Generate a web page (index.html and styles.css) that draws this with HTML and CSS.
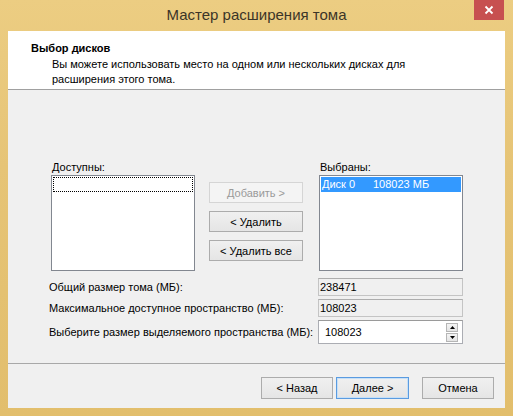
FILE: index.html
```html
<!DOCTYPE html>
<html lang="ru">
<head>
<meta charset="utf-8">
<title>Мастер расширения тома</title>
<link rel="stylesheet" href="styles.css">
</head>
<body>
<div class="window">
  <div class="titlebar">
    <div class="title">Мастер расширения тома</div>
    <div class="close">
      <svg width="10" height="10" viewBox="0 0 10 10"><path d="M1.5 1.5 L8.5 8.5 M8.5 1.5 L1.5 8.5" stroke="#fff" stroke-width="1.8"/></svg>
    </div>
  </div>
  <div class="client">
    <div class="header">
      <div class="h-title">Выбор дисков</div>
      <div class="h-desc">Вы можете использовать место на одном или нескольких дисках для расширения этого тома.</div>
    </div>
    <div class="body">
      <div class="lists">
        <div class="col">
          <div class="label">Доступны:</div>
          <div class="listbox">
            <div class="focus-row"></div>
          </div>
        </div>
        <div class="mid">
          <div class="btn disabled">Добавить &gt;</div>
          <div class="btn">&lt; Удалить</div>
          <div class="btn">&lt; Удалить все</div>
        </div>
        <div class="col col-right">
          <div class="label">Выбраны:</div>
          <div class="listbox">
            <div class="sel-row"><span class="disk">Диск 0</span><span>108023 МБ</span></div>
          </div>
        </div>
      </div>
      <div class="fields">
        <div class="f-label">Общий размер тома (МБ):</div>
        <div class="ro">238471</div>
        <div class="f-label">Максимальное доступное пространство (МБ):</div>
        <div class="ro">108023</div>
        <div class="f-label">Выберите размер выделяемого пространства (МБ):</div>
        <div class="num">
          <span class="num-val">108023</span>
          <span class="spin">
            <span class="spin-btn"><svg width="5" height="3" viewBox="0 0 5 3"><path d="M0 3 L2.5 0 L5 3 Z" fill="#000"/></svg></span>
            <span class="spin-btn"><svg width="5" height="3" viewBox="0 0 5 3"><path d="M0 0 L2.5 3 L5 0 Z" fill="#000"/></svg></span>
          </span>
        </div>
      </div>
    </div>
    <div class="footer">
      <div class="btn fbtn">&lt; Назад</div>
      <div class="btn fbtn default">Далее &gt;</div>
      <div class="btn fbtn cancel">Отмена</div>
    </div>
  </div>
</div>
</body>
</html>
```

FILE: styles.css
```css
html, body {
  margin: 0;
  padding: 0;
}
body {
  width: 513px;
  height: 416px;
  overflow: hidden;
  font-family: "Liberation Sans", Arial, sans-serif;
  font-size: 11px;
  color: #000;
}
.window {
  box-sizing: border-box;
  width: 513px;
  height: 416px;
  background: linear-gradient(180deg, #eccd82 0%, #e6c476 40%, #e2be6c 100%);
  padding: 0 8px 8px 8px;
  display: flex;
  flex-direction: column;
}
.titlebar {
  position: relative;
  height: 31px;
  flex: none;
}
.title {
  text-align: center;
  font-size: 15px;
  line-height: 30px;
  color: #3c3528;
  padding-right: 0;
}
.close {
  position: absolute;
  top: 0;
  right: 1px;
  width: 30px;
  height: 20px;
  background: #c75050;
  display: flex;
  align-items: center;
  justify-content: center;
}
.client {
  flex: 1;
  background: #f0f0f0;
  display: flex;
  flex-direction: column;
}
.header {
  background: #fff;
  height: 48px;
  padding: 10px 0 0 23px;
  border-bottom: 1px solid #a0a0a0;
  flex: none;
}
.h-title {
  font-weight: bold;
  line-height: 14px;
}
.h-desc {
  margin: 2px 0 0 21px;
  line-height: 15px;
  width: 370px;
}
.body {
  flex: 1;
}
.lists {
  display: flex;
  margin: 70px 0 0 43px;
}
.col {
  width: 144px;
}
.col-right {
  margin-left: 16px;
}
.label {
  line-height: 15px;
  padding-left: 1px;
}
.listbox {
  box-sizing: border-box;
  height: 96px;
  border: 1px solid #828790;
  background: #fff;
  padding: 1px;
}
.focus-row {
  height: 15px;
  outline: 1px dotted #000;
  outline-offset: 0;
  border: 1px dotted #000;
  box-sizing: border-box;
  outline: none;
}
.sel-row {
  height: 15px;
  background: #3399ff;
  color: #fff;
  line-height: 15px;
  padding-left: 1px;
  display: flex;
}
.disk {
  width: 51px;
}
.mid {
  width: 94px;
  margin-left: 14px;
  padding-top: 22px;
  display: flex;
  flex-direction: column;
  gap: 8px;
}
.btn {
  box-sizing: border-box;
  height: 21px;
  border: 1px solid #acacac;
  background: linear-gradient(180deg, #f0f0f0 0%, #e5e5e5 100%);
  display: flex;
  align-items: center;
  justify-content: center;
  color: #000;
}
.btn.disabled {
  border-color: #d5d5d5;
  background: #f4f4f4;
  color: #9a9a9a;
}
.fields {
  display: grid;
  grid-template-columns: 269px 145px;
  grid-template-rows: 18px 18px 24px;
  row-gap: 3px;
  margin: 7px 0 0 41px;
  align-items: center;
}
.f-label {
  line-height: 15px;
}
.ro {
  box-sizing: border-box;
  height: 18px;
  border: 1px solid #c4c4c4;
  border-top-color: #adadad;
  background: #f0f0f0;
  line-height: 16px;
  padding-left: 1px;
}
.num {
  box-sizing: border-box;
  height: 24px;
  border: 1px solid #abadb3;
  border-top-color: #9a9a9a;
  background: #fff;
  display: flex;
  align-items: center;
  padding: 1px 4px 1px 6px;
}
.num-val {
  flex: 1;
}
.spin {
  display: flex;
  flex-direction: column;
  width: 12px;
  height: 19px;
  gap: 1px;
}
.spin-btn {
  flex: 1;
  box-sizing: border-box;
  border: 1px solid #b5b5b5;
  background: linear-gradient(180deg, #f4f4f4, #e4e4e4);
  display: flex;
  align-items: center;
  justify-content: center;
}
.footer {
  flex: none;
  height: 45px;
  border-top: 1px solid #a8a8a8;
  display: flex;
  justify-content: flex-end;
  align-items: flex-start;
  padding: 13px 11px 0 0;
  box-sizing: border-box;
  gap: 3px;
}
.fbtn {
  width: 72px;
  height: 22px;
}
.fbtn.default {
  width: 73px;
  border-color: #5a9be0;
  box-shadow: inset 0 0 0 1px #c7e0f7;
}
.fbtn.cancel {
  margin-left: 10px;
}
```
